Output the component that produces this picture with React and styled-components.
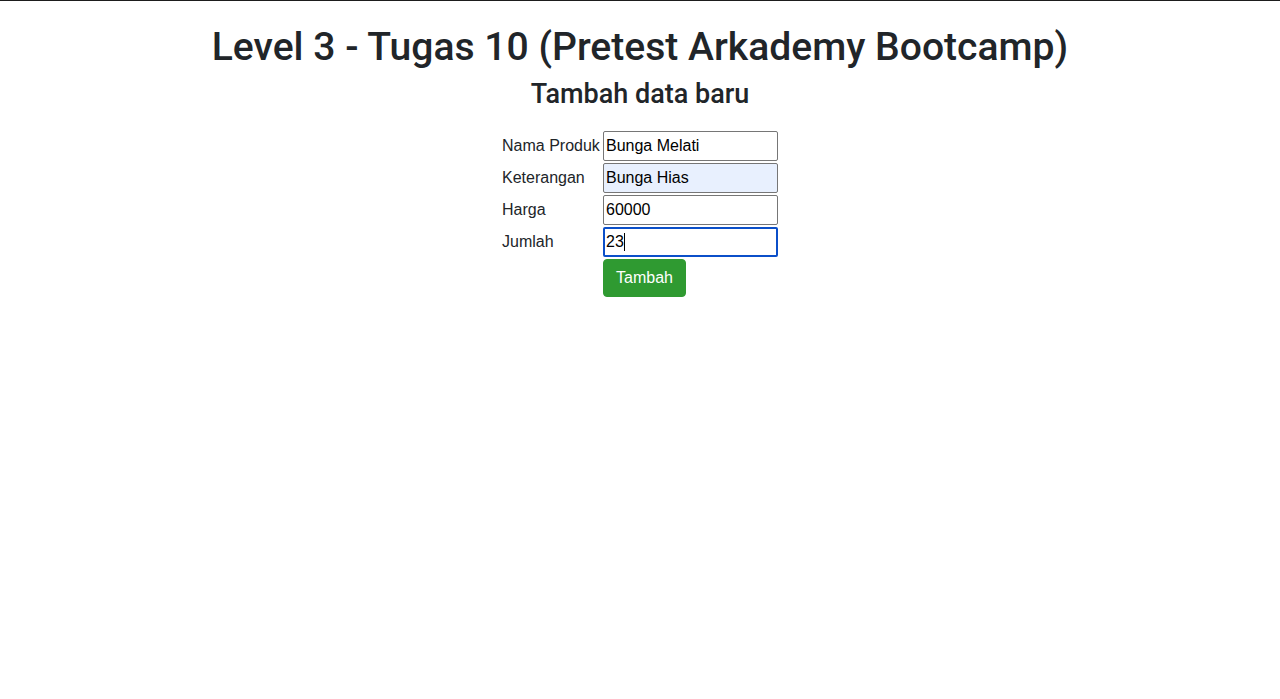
import React from 'react';
import styled, { createGlobalStyle } from 'styled-components';

const GlobalStyle = createGlobalStyle`
  html, body {
    margin: 0;
    padding: 0;
    background: #fff;
  }
  body {
    font-family: "Liberation Sans", Arial, sans-serif;
    color: #212529;
    border-top: 1px solid #1d1d1d;
  }
`;

const Page = styled.div`
  display: flex;
  flex-direction: column;
  align-items: center;
  min-height: 698px;
`;

const Title = styled.h1`
  margin: 22px 0 0;
  font-family: Roboto, "Liberation Sans", sans-serif;
  font-size: 39.1px;
  font-weight: 500;
  line-height: 48px;
`;

const Subtitle = styled.h3`
  margin: 6px 0 0;
  font-family: Roboto, "Liberation Sans", sans-serif;
  font-size: 27px;
  font-weight: 500;
  line-height: 34px;
`;

const Form = styled.form`
  display: grid;
  grid-template-columns: 101px 175px;
  row-gap: 2px;
  margin-top: 20px;
  align-items: center;
`;

const Label = styled.label`
  font-size: 16px;
  line-height: 30px;
  color: #212529;
  white-space: nowrap;
`;

const Input = styled.input`
  box-sizing: border-box;
  width: 175px;
  height: 30px;
  margin: 0;
  padding: 1px 2px;
  font-family: "Liberation Sans", Arial, sans-serif;
  font-size: 16px;
  color: #000;
  background: ${p => (p.$autofill ? '#e8f0fe' : '#fff')};
  border: 1px solid #767676;
  border-radius: 2px;
  outline: none;
`;

const Caret = styled.span`
  display: inline-block;
  width: 1px;
  height: 18px;
  background: #000;
  vertical-align: middle;
`;

const FocusedInput = styled.div`
  box-sizing: border-box;
  width: 175px;
  height: 30px;
  padding: 0 1px;
  display: flex;
  align-items: center;
  font-size: 16px;
  color: #000;
  border: 2px solid #0b4fc9;
  border-radius: 2px;
`;

const Button = styled.button`
  justify-self: start;
  padding: 6px 12px;
  font-family: "Liberation Sans", Arial, sans-serif;
  font-size: 16px;
  line-height: 24px;
  color: #fff;
  background: #2f9a31;
  border: 1px solid #2f9a31;
  border-radius: 4px;
  cursor: pointer;
`;

const fields = [
  { label: 'Nama Produk', value: 'Bunga Melati' },
  { label: 'Keterangan', value: 'Bunga Hias', autofill: true },
  { label: 'Harga', value: '60000' },
];

export default function App() {
  return (
    <>
      <GlobalStyle />
      <Page>
        <Title>Level 3 - Tugas 10 (Pretest Arkademy Bootcamp)</Title>
        <Subtitle>Tambah data baru</Subtitle>
        <Form onSubmit={e => e.preventDefault()}>
          {fields.map(f => (
            <React.Fragment key={f.label}>
              <Label>{f.label}</Label>
              <Input defaultValue={f.value} $autofill={f.autofill} />
            </React.Fragment>
          ))}
          <Label>Jumlah</Label>
          <FocusedInput>
            23<Caret />
          </FocusedInput>
          <span />
          <Button type="submit">Tambah</Button>
        </Form>
      </Page>
    </>
  );
}
